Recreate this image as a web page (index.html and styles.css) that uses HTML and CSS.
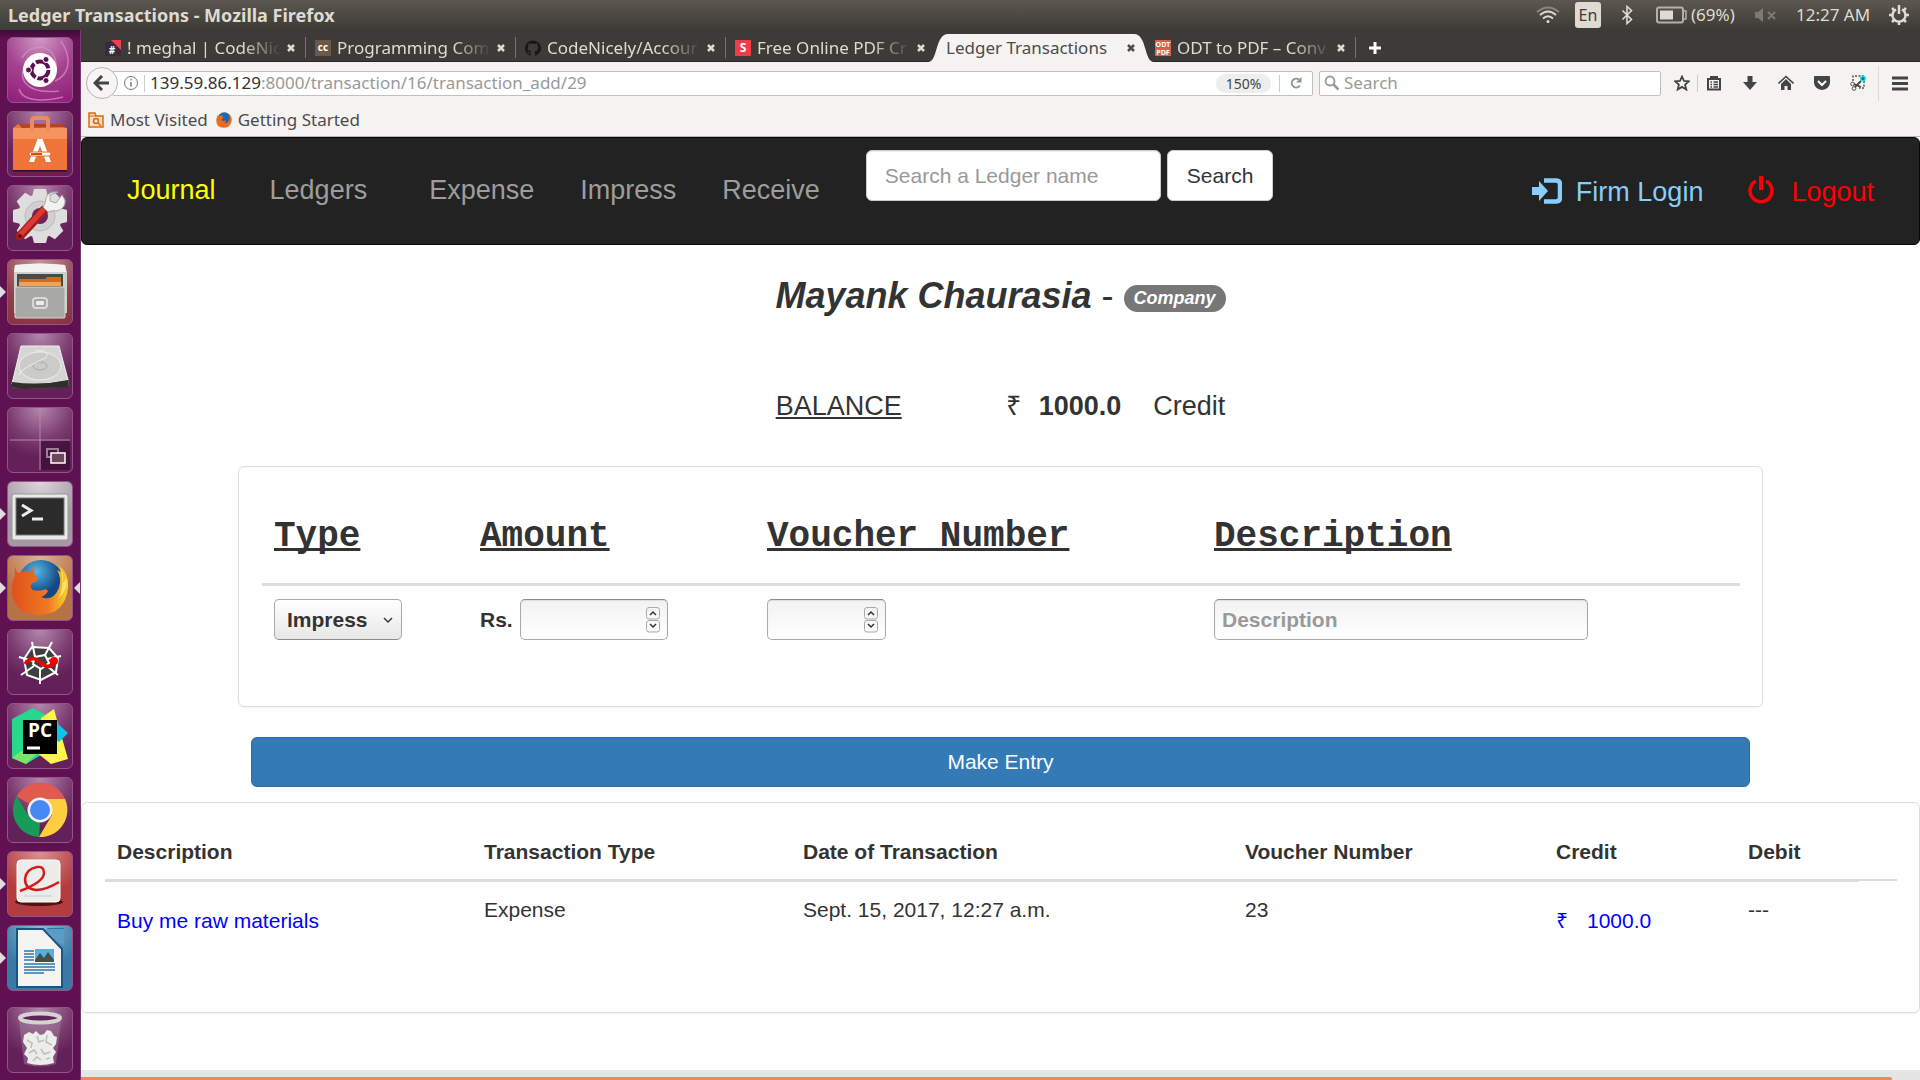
FILE: index.html
```html
<!DOCTYPE html>
<html lang="en">
<head>
<meta charset="utf-8">
<title>Ledger Transactions</title>
<link rel="stylesheet" href="styles.css">
</head>
<body>
<header class="panel">
  <span class="panel-title">Ledger Transactions - Mozilla Firefox</span>
  <div class="panel-status">
    <svg class="ind-wifi" width="24" height="20" viewBox="0 0 24 20" fill="none" stroke="#dfdbd2" stroke-width="2"><path d="M1 7Q12-2 23 7" stroke="#8b877f"/><path d="M4 10Q12 3 20 10"/><path d="M7 13.500Q12 9 17 13.500"/><circle cx="12" cy="16.500" r="1.500" fill="#dfdbd2" stroke="none"/></svg>
    <span class="lang">En</span>
    <svg class="ind-bt" width="12" height="20" viewBox="0 0 12 20" fill="none" stroke="#dfdbd2" stroke-width="1.600"><path d="M1.500 5.500l9 9L6 18.500v-17l4.500 4-9 9"/></svg>
    <svg class="ind-bat" width="31" height="18" viewBox="0 0 31 18"><rect x="1" y="1.500" width="26" height="15" rx="2" fill="none" stroke="#b5b1a8" stroke-width="2"/><path d="M28 5h2v8h-2" fill="none" stroke="#b5b1a8" stroke-width="1.500"/><rect x="4" y="4.500" width="13" height="9" fill="#dfdbd2"/></svg>
    <span class="pct">(69%)</span>
    <svg class="ind-mute" width="24" height="16" viewBox="0 0 24 16"><path d="M1 5h3l5-4v14l-5-4H1z" fill="#7d7a73"/><path d="M14 5l7 7M21 5l-7 7" stroke="#7d7a73" stroke-width="2"/></svg>
    <span class="clock">12:27 AM</span>
    <svg class="ind-gear" width="22" height="22" viewBox="0 0 22 22" fill="none" stroke="#dfdbd2"><path d="M8 5.500a6.500 6.500 0 1 0 6 0" stroke-width="2.500"/><path d="M11 1v9" stroke-width="2.500"/><path d="M4 4l3 3M18 4l-3 3M1 11h4M21 11h-4M4 18l3-3M18 18l-3-3M11 21v-4" stroke-width="2.500"/></svg>
  </div>
</header>
<div class="desktop">
<nav class="launcher" aria-label="Launcher">
  <button class="tile dash" aria-label="Dash"><svg viewBox="0 0 66 66"><path d="M21 24C8 40 18 58 52 54M15 21C24 4 52 6 49 34M48 44C62 38 66 22 54 4M12 52C16 66 40 64 56 60" fill="none" stroke="#dd8fca" stroke-width="1.500" opacity=".7"/><circle cx="33" cy="33" r="17" fill="#fff"/><circle cx="33" cy="33" r="8.500" fill="none" stroke="#5e1151" stroke-width="4" stroke-dasharray="15.800 2"/><g fill="#5e1151" stroke="#fff" stroke-width="1"><circle cx="21.500" cy="33" r="3"/><circle cx="39" cy="22.500" r="3"/><circle cx="39" cy="43.500" r="3"/></g></svg></button>
  <button class="tile" aria-label="Software"><svg viewBox="0 0 66 66"><path d="M6 59h54" stroke="#350a2e" stroke-width="3"/><path d="M6 18l5-5h44l5 5z" fill="#b9441c"/><path d="M6 17l5-4 4 4 40-1 5 1v42H6z" fill="#ee7537"/><path d="M6 17h54v11H6z" fill="#f69361"/><path d="M25 21V10q0-3 3-3h10q3 0 3 3v11" fill="none" stroke="#e98c60" stroke-width="4"/><path d="M22 51L30.500 28h5L44 51h-5l-6-16-6 16z" fill="#fff"/><rect x="22" y="41" width="22" height="4" rx="2" fill="#fff" stroke="#e26a33"/><path d="M24 43h11" stroke="#dd4814" stroke-width="2"/></svg></button>
  <button class="tile" aria-label="System Settings"><svg viewBox="0 0 66 66"><g transform="translate(33 31)" fill="#dedede"><circle r="22"/><path d="M-6-27h12l2 8H-8zM-6 27h12l2-8H-8z"/><path d="M-6-27h12l2 8H-8zM-6 27h12l2-8H-8z" transform="rotate(45)"/><path d="M-6-27h12l2 8H-8zM-6 27h12l2-8H-8z" transform="rotate(90)"/><path d="M-6-27h12l2 8H-8zM-6 27h12l2-8H-8z" transform="rotate(135)"/><circle r="15" fill="#d0d0d0" stroke="#bbb"/><circle r="8" fill="#6d2362"/></g><path d="M13 51L37 25" stroke="#a31d1d" stroke-width="9" stroke-linecap="round"/><path d="M14 49L36 25" stroke="#d93a36" stroke-width="5" stroke-linecap="round"/><circle cx="13" cy="51" r="2" fill="#6a1010"/><path d="M36 22l5 5q5-2 9-1 9-3 8-11l-3-5-6 8-6-2v-6l8-3q-10-1-12 6 0 5-3 9z" fill="#f2f2f0" stroke="#aaa"/></svg></button>
  <button class="tile files running" aria-label="Files"><svg viewBox="0 0 66 66"><path d="M8 6q25-3 50 0l2 7v41q-27 2-53 0V13z" fill="#cfcfcd"/><path d="M8 6q25-3 50 0l1 7H7z" fill="#f2f2f0"/><rect x="10" y="15" width="46" height="16" fill="#4a4a48"/><path d="M12 20h26l2-2h14v9H12z" fill="#d2691e"/><path d="M12 23h42v4H12z" fill="#eda35a"/><rect x="8" y="28" width="50" height="31" rx="1" fill="#a8a8a5" stroke="#d5d5d3"/><rect x="26" y="39" width="14" height="10" rx="3" fill="none" stroke="#d9d9d7" stroke-width="2"/><rect x="29" y="42" width="8" height="4" rx="1" fill="#ececea"/></svg></button>
  <button class="tile" aria-label="Disk"><svg viewBox="0 0 66 66"><path d="M5 47l9-34h38l10 34v6q-29 5-57 2z" fill="#555"/><path d="M14 13h38l9 34-28 4H5z" fill="#d5d5d3" stroke="#f1f1f0"/><path d="M5 49q28 4 56-2v7l-45 2-11-2z" fill="#2f2f2f"/><ellipse cx="33" cy="33" rx="21" ry="14" fill="#cbcbc9" stroke="#efefee"/><ellipse cx="33" cy="33" rx="7" ry="4" fill="none" stroke="#aaa"/><path d="M28 18h9q7 5-1 8l-12 6q-10 5-12 10" fill="none" stroke="#eee"/></svg></button>
  <button class="tile" aria-label="Workspaces"><svg viewBox="0 0 66 66"><path d="M34 34h29v29H34z" fill="#3a0c33" opacity=".7"/><path d="M33 3v60M3 33h60" stroke="#b08aa9" stroke-width="1"/><path d="M40 42h11v8H40z" fill="none" stroke="#9b8096" stroke-width="2"/><path d="M44 46h14v10H44z" fill="#70465f" stroke="#fff" stroke-width="1.500"/></svg></button>
  <button class="tile terminal running" aria-label="Terminal"><svg viewBox="0 0 66 66"><rect x="5" y="13" width="56" height="46" rx="2" fill="#e9e9e7" stroke="#9a9a98"/><rect x="9" y="17" width="48" height="37" fill="#2b2b2b" stroke="#777"/><path d="M15 24l9 5.500-9 5.500" fill="none" stroke="#eee" stroke-width="3"/><path d="M25 38h11" stroke="#eee" stroke-width="3"/></svg></button>
  <button class="tile firefox running active" aria-label="Firefox"><svg viewBox="0 0 66 66"><defs><radialGradient id="globe" cx=".4" cy=".25"><stop offset="0" stop-color="#58b6e5"/><stop offset="1" stop-color="#134785"/></radialGradient><linearGradient id="fox" x1="0" x2="1"><stop offset="0" stop-color="#e0501b"/><stop offset=".65" stop-color="#f07a22"/><stop offset="1" stop-color="#fbd52b"/></linearGradient></defs><circle cx="34" cy="28" r="23" fill="url(#globe)"/><path d="M9 11q-1 5 2 7 6-3 12-1l3-5q0 8 5 11-2 5-6 5-3 4 1 7 5 1 10 0 3-2 5 1-2 4-7 6 12 5 18-9 3-10-2-18l4 2q-1-5-4-8 12 8 11 24-3 26-28 27Q5 60 5 33q0-8 3-12-1-6 1-10z" fill="url(#fox)"/><path d="M53 12q5 8 2 17l5-6q0 14-10 22 9-13 3-33z" fill="#fbe36a"/></svg></button>
  <button class="tile" aria-label="Web tool"><svg viewBox="0 0 66 66"><path d="M25 18l17 1 9 10-2 14-15 8-14-5-3-16z" fill="#3f3f3f" stroke="#fff" stroke-width="2"/><path d="M25 13l3 15M45 13l-7 13M54 27l-14 3M51 46l-11-9M33 55V39M14 46l13-9M12 28l14 4M28 28l10-2 4 8-8 6-8-5z" fill="none" stroke="#fff" stroke-width="2"/><path d="M18 35q6-8 12-4 8 8 14 6l5-6" fill="none" stroke="#f00000" stroke-width="3.500"/><circle cx="47" cy="32" r="4" fill="#f00000"/></svg></button>
  <button class="tile" aria-label="PyCharm"><svg viewBox="0 0 66 66"><path d="M26 5L5 16v39l14 6 20-12V12z" fill="#25d88c"/><path d="M34 15L47 6l4 15 10 35-17 5-15-12z" fill="#fcf64a"/><path d="M49 19l12 11-9 9-4-3z" fill="#10c3e8"/><path d="M14 48L5 55l14 6 12-11z" fill="#79e36a"/><rect x="16" y="17" width="34" height="34" fill="#000"/><text x="33" y="34" class="pc-text">PC</text><path d="M20 45h13" stroke="#fff" stroke-width="3"/></svg></button>
  <button class="tile" aria-label="Chrome"><svg viewBox="0 0 66 66"><path d="M33 33L9.600 19.500A27 27 0 0 1 58 22H33z" fill="#df5b4e"/><path d="M33 22h25A27 27 0 0 1 32 60l13-22z" fill="#fdcf3e"/><path d="M9.600 19.500L23 41l10 5-1 14A27 27 0 0 1 9.600 19.500z" fill="#179c57"/><circle cx="33" cy="33" r="12.500" fill="#f1f1f1"/><circle cx="33" cy="33" r="10" fill="#4688f4"/></svg></button>
  <button class="tile pdf running" aria-label="PDF viewer"><svg viewBox="0 0 66 66"><ellipse cx="32" cy="51" rx="24" ry="4" fill="#541010"/><rect x="10" y="9" width="43" height="42" rx="4" fill="#ececeb" stroke="#fff"/><path d="M13 40q24-9 24-18 0-7-7-6-11 2-12 12 0 10 11 11 10 0 23-8" fill="none" stroke="#d61a1a" stroke-width="2.500"/><path d="M17 45h28" stroke="#ccc"/></svg></button>
  <button class="tile writer running" aria-label="Writer"><svg viewBox="0 0 66 66"><path d="M11 3h46v18L40 3z" fill="#2a76ac"/><path d="M10 4h26l19 20v38H10z" fill="#f4f4f3" stroke="#1b5583" stroke-width="2"/><path d="M38 4h19v17z" fill="#5b9cc6"/><rect x="28" y="24" width="19" height="13" fill="#59aede"/><path d="M28 35l5-7 4 5 4-6 6 8v2H28z" fill="#454f45"/><path d="M17 26h10M17 29h10M17 32h10M17 35h10M17 39h31M17 42h31M17 45h31M17 48h20" stroke="#2a78b4" stroke-width="1.500"/></svg></button>
  <button class="tile trash" aria-label="Trash"><svg viewBox="0 0 66 66"><path d="M12 14l5 43q16 5 32 0l5-43z" fill="#a185a0" opacity=".45"/><path d="M17 28l5-3 4 2 3-3 4 4 4-1 3-4 4 1 3 5 3 1-1 7-3 4 3 4-3 5 1 6q-14 4-27 0l1-5-4-4 3-6-4-6z" fill="#ececea"/><path d="M20 33l5 3-1 5M30 29l2 6 5-2M40 28l-1 7 6 3M22 46l5-3 3 4M34 42l3 5 6-2M26 54l4-4 4 3M39 52l4-1" fill="none" stroke="#bdbdbb" stroke-width="1.500"/><ellipse cx="33" cy="11" rx="20" ry="4.500" fill="#61215a" stroke="#d4d4d2" stroke-width="4"/></svg></button>
</nav>
<div class="browser">
  <div class="tabs">
    <div class="tab"><svg class="fav" viewBox="0 0 16 16"><path fill="#3b2a3e" d="M0 2h16v14H0z"/><path fill="#ee3f56" d="M6 0h10v10z"/><text x="7" y="14" class="fav-text">#</text></svg><span class="tab-name">! meghal | CodeNic</span><button class="x" aria-label="Close tab"><svg width="8" height="8" viewBox="0 0 8 8"><path d="M1 1l6 6M7 1L1 7" stroke="currentColor" stroke-width="2.500"/></svg></button></div>
    <div class="tab"><svg class="fav" viewBox="0 0 16 16"><path fill="#6e5745" d="M0 0h16v16H0z"/><text x="8" y="11" class="fav-text">cc</text></svg><span class="tab-name">Programming Com</span><button class="x" aria-label="Close tab"><svg width="8" height="8" viewBox="0 0 8 8"><path d="M1 1l6 6M7 1L1 7" stroke="currentColor" stroke-width="2.500"/></svg></button></div>
    <div class="tab"><svg class="fav" viewBox="0 0 16 16"><path fill="#191717" d="M8 .5C3.500.5 0 4 0 8.200c0 3.500 2.300 6.400 5.500 7.400.4 0 .5-.2.5-.4v-1.500c-2.200.5-2.700-1-2.700-1-.4-.9-.9-1.200-.9-1.200-.7-.5.1-.5.1-.5.800.1 1.200.8 1.200.8.700 1.200 1.900.9 2.300.7.100-.5.300-.9.500-1.100-1.800-.2-3.600-.9-3.600-3.900 0-.9.300-1.600.8-2.200-.1-.200-.4-1 .1-2.100 0 0 .7-.2 2.200.8a7.500 7.500 0 0 1 4 0c1.500-1 2.200-.8 2.200-.8.500 1.100.2 1.900.1 2.100.5.600.8 1.300.8 2.200 0 3-1.900 3.700-3.600 3.900.3.300.5.800.5 1.500v2.300c0 .2.100.5.500.4 3.200-1 5.500-4 5.500-7.400C16 4 12.400.5 8 .5z"/></svg><span class="tab-name">CodeNicely/Accour</span><button class="x" aria-label="Close tab"><svg width="8" height="8" viewBox="0 0 8 8"><path d="M1 1l6 6M7 1L1 7" stroke="currentColor" stroke-width="2.500"/></svg></button></div>
    <div class="tab before"><svg class="fav" viewBox="0 0 16 16"><path fill="#f03c46" d="M0 0h16v16H0z"/><text x="8" y="12" class="fav-text big">S</text></svg><span class="tab-name">Free Online PDF Cr</span><button class="x" aria-label="Close tab"><svg width="8" height="8" viewBox="0 0 8 8"><path d="M1 1l6 6M7 1L1 7" stroke="currentColor" stroke-width="2.500"/></svg></button></div>
    <div class="tab current"><svg class="tab-shape" viewBox="0 0 226 28" preserveAspectRatio="none"><path d="M0 28C10 28 7 0 20 0H206C219 0 216 28 226 28z" fill="#f4f3f1"/></svg><span class="tab-name">Ledger Transactions</span><button class="x" aria-label="Close tab"><svg width="8" height="8" viewBox="0 0 8 8"><path d="M1 1l6 6M7 1L1 7" stroke="currentColor" stroke-width="2.500"/></svg></button></div>
    <div class="tab"><svg class="fav" viewBox="0 0 16 16"><path fill="#dc5f47" d="M0 0h16v16H0z"/><text x="8" y="7" class="fav-text small">ODT</text><text x="8" y="15" class="fav-text small">PDF</text></svg><span class="tab-name">ODT to PDF – Conv</span><button class="x" aria-label="Close tab"><svg width="8" height="8" viewBox="0 0 8 8"><path d="M1 1l6 6M7 1L1 7" stroke="currentColor" stroke-width="2.500"/></svg></button></div>
    <button class="new-tab" aria-label="New tab"><svg width="14" height="14" viewBox="0 0 14 14"><path d="M7 1v12M1 7h12" stroke="#fff" stroke-width="3"/></svg></button>
  </div>
  <div class="toolbar">
    <button class="back" aria-label="Back"><svg width="18" height="16" viewBox="0 0 18 16"><path d="M9 1L2 8l7 7M2 8h14" fill="none" stroke="#444" stroke-width="3"/></svg></button>
    <div class="urlbar">
      <svg width="16" height="16" viewBox="0 0 16 16"><circle cx="8" cy="8" r="6.500" fill="none" stroke="#777"/><path d="M8 7v4.500M8 4v1.500" stroke="#777" stroke-width="1.500"/></svg>
      <span class="url-sep"></span>
      <span class="url"><b>139.59.86.129</b>:8000/transaction/16/transaction_add/29</span>
      <span class="zoom">150%</span>
      <button class="reload" aria-label="Reload"><svg width="14" height="14" viewBox="0 0 14 14"><path d="M11 9.500a4.500 4.500 0 1 1-1-6" fill="none" stroke="#8a94a0" stroke-width="1.800"/><path d="M12.500 1v5.500H7z" fill="#8a94a0"/></svg></button>
    </div>
    <label class="search"><svg width="16" height="16" viewBox="0 0 16 16"><circle cx="6" cy="6" r="4.500" fill="none" stroke="#999" stroke-width="1.800"/><path d="M9.500 9.500l5 5" stroke="#999" stroke-width="2.500"/></svg><input class="search-input" type="text" placeholder="Search" aria-label="Web search"></label>
    <div class="tools">
      <button class="tool" aria-label="Bookmark"><svg viewBox="0 0 16 16"><path d="M8 1.500l2 4.500 4.800.4-3.700 3.200 1.200 4.900L8 11.900l-4.300 2.600 1.200-4.900L1.200 6.400 6 6z" fill="none" stroke="#444" stroke-width="1.800"/></svg></button>
      <span class="tool-sep"></span>
      <button class="tool" aria-label="Library"><svg viewBox="0 0 16 16"><path d="M2 4h12v10.500H2z" fill="none" stroke="#444" stroke-width="2"/><path d="M5 4V2h6v2" fill="none" stroke="#444" stroke-width="2"/><path d="M4.500 7h1.500M7.500 7h4.500M4.500 9.500h1.500M7.500 9.500h4.500M4.500 12h1.500M7.500 12h4.500" stroke="#444" stroke-width="1.300"/></svg></button>
      <button class="tool" aria-label="Downloads"><svg viewBox="0 0 16 16"><path d="M5.500 1h5v6H15l-7 8-7-8h4.500z" fill="#444"/></svg></button>
      <button class="tool" aria-label="Home"><svg viewBox="0 0 16 16"><path d="M.5 8.500L8 1.500l7.500 7" fill="none" stroke="#444" stroke-width="1.600"/><path d="M3 9l5-5 5 5v6H9.500v-4h-3v4H3z" fill="#444"/></svg></button>
      <button class="tool" aria-label="Pocket"><svg viewBox="0 0 16 16"><path d="M1 1h14q1 0 1 1v6q-1 6-8 7-7-1-8-7V2q0-1 1-1z" fill="#444"/><path d="M4 6l4 4 4-4" fill="none" stroke="#fff" stroke-width="2"/></svg></button>
      <button class="tool" aria-label="Screenshot"><svg viewBox="0 0 16 16"><path d="M3 6V1h11v12h-5" fill="none" stroke="#555" stroke-width="1.500" stroke-dasharray="2 1.500"/><circle cx="2.500" cy="9" r="1.800" fill="none" stroke="#555"/><circle cx="4" cy="13.500" r="1.800" fill="none" stroke="#555"/><path d="M4 9l7 3M5 12l6-6" stroke="#444" stroke-width="1.800"/><circle cx="13" cy="3.500" r="3" fill="#14e4f4"/><circle cx="13" cy="3.500" r="1.500" fill="#0a6c80"/></svg></button>
      <span class="menu-sep"></span>
      <button class="tool" aria-label="Menu"><svg viewBox="0 0 16 16"><path d="M0 3h16M0 8.500h16M0 14h16" stroke="#444" stroke-width="3"/></svg></button>
    </div>
  </div>
  <div class="bookmarks">
    <svg width="16" height="16" viewBox="0 0 16 16"><path d="M1 15V1h6l1 3h7v11z" fill="#fbe0c0" stroke="#d56b12" stroke-width="1.500"/><path d="M1 4h7" stroke="#d56b12"/><circle cx="8" cy="9" r="2.500" fill="none" stroke="#d56b12" stroke-width="1.500"/><path d="M10 11l3 3" stroke="#d56b12" stroke-width="1.500"/></svg>
    <a href="#" class="mark">Most Visited</a>
    <svg width="16" height="16" viewBox="4 3 58 58"><circle cx="34" cy="28" r="24" fill="#2467ab"/><path d="M9 11q-1 5 2 7 6-3 12-1l3-5q0 8 5 11-2 5-6 5-3 4 1 7 5 1 10 0 3-2 5 1-2 4-7 6 12 5 18-9 3-10-2-18l4 2q-1-5-4-8 12 8 11 24-3 26-28 27Q5 60 5 33q0-8 3-12-1-6 1-10z" fill="#ec6a1f"/></svg>
    <a href="#" class="mark">Getting Started</a>
  </div>
  <main class="page">
    <nav class="navbar">
      <a href="#" class="nav-link brand">Journal</a>
      <a href="#" class="nav-link ledgers">Ledgers</a>
      <a href="#" class="nav-link">Expense</a>
      <a href="#" class="nav-link">Impress</a>
      <a href="#" class="nav-link">Receive</a>
      <form class="nav-form"><input class="nav-input" type="text" placeholder="Search a Ledger name" aria-label="Search a Ledger name"><button type="button" class="nav-btn">Search</button></form>
      <div class="nav-right">
        <a href="#" class="user-link login"><svg width="30" height="26" viewBox="0 0 30 26"><path d="M0 9h7V3l9 10-9 10v-6H0z" fill="#87cefa"/><path d="M12 2.500h12q4 0 4 4v13q0 4-4 4H12" fill="none" stroke="#87cefa" stroke-width="4.500"/></svg>Firm Login</a>
        <a href="#" class="user-link logout"><svg width="26" height="28" viewBox="0 0 26 28"><path d="M8 5a11 11 0 1 0 10 0" fill="none" stroke="red" stroke-width="3.500"/><path d="M13 0v14" stroke="red" stroke-width="4"/></svg>Logout</a>
      </div>
    </nav>
    <h1 class="title"><strong><em>Mayank Chaurasia</em></strong> - <em class="badge">Company</em></h1>
    <p class="balance"><u>BALANCE</u><span class="rupee">₹</span><strong>1000.0</strong><span class="side">Credit</span></p>
    <form class="entry">
      <div class="card">
        <table class="fields">
          <colgroup><col class="f-type"><col class="f-amount"><col class="f-voucher"><col></colgroup>
          <thead><tr><th><u>Type</u></th><th><u>Amount</u></th><th><u>Voucher Number</u></th><th><u>Description</u></th></tr></thead>
          <tbody><tr>
            <td><span class="field w-type"><select class="control select" aria-label="Type"><option>Impress</option><option>Expense</option><option>Receive</option></select><svg class="caret" width="10" height="6" viewBox="0 0 10 6"><path d="M1 1l4 4 4-4" fill="none" stroke="#3c3b37" stroke-width="1.500"/></svg></span></td>
            <td><div class="amount"><label for="amount">Rs.</label><span class="field w-amount"><input id="amount" class="control" type="number"><svg class="spin" width="14" height="26" viewBox="0 0 14 26" fill="none" stroke="#aaa"><rect x=".5" y=".5" width="13" height="11.500" rx="2.500"/><rect x=".5" y="13.500" width="13" height="11.500" rx="2.500"/><path d="M4 8l3-3 3 3M4 17l3 3 3-3" stroke="#333" stroke-width="1.500"/></svg></span></div></td>
            <td><span class="field w-voucher"><input class="control" type="number" aria-label="Voucher Number"><svg class="spin" width="14" height="26" viewBox="0 0 14 26" fill="none" stroke="#aaa"><rect x=".5" y=".5" width="13" height="11.500" rx="2.500"/><rect x=".5" y="13.500" width="13" height="11.500" rx="2.500"/><path d="M4 8l3-3 3 3M4 17l3 3 3-3" stroke="#333" stroke-width="1.500"/></svg></span></td>
            <td><span class="field w-desc"><input class="control" type="text" placeholder="Description" aria-label="Description"></span></td>
          </tr></tbody>
        </table>
      </div>
      <button type="button" class="make">Make Entry</button>
    </form>
    <section class="card ledger">
      <table class="rows">
        <colgroup><col class="c-desc"><col class="c-type"><col class="c-date"><col class="c-voucher"><col class="c-credit"><col class="c-debit"><col></colgroup>
        <thead><tr><th>Description</th><th>Transaction Type</th><th>Date of Transaction</th><th>Voucher Number</th><th>Credit</th><th>Debit</th><th></th></tr></thead>
        <tbody><tr><td><a href="#" class="entry-link">Buy me raw materials</a></td><td>Expense</td><td>Sept. 15, 2017, 12:27 a.m.</td><td>23</td><td><a href="#" class="entry-link"><span class="coin">₹</span>1000.0</a></td><td>---</td><td class="end"></td></tr></tbody>
      </table>
    </section>
    <div class="hscroll"><div class="hscroll-thumb"></div></div>
  </main>
</div>
</div>
</body>
</html>
```
FILE: styles.css
```css
* { box-sizing: border-box; }
body { margin: 0; min-height: 100vh; display: flex; flex-direction: column; font-family: "Noto Sans", sans-serif; font-size: 17px; line-height: 22px; background: #fff; }
button { border: 0; padding: 0; background: none; font: inherit; color: inherit; }
svg { display: block; flex: none; }

.panel { height: 30px; display: flex; align-items: center; justify-content: space-between; padding: 0 10px 0 8px; color: #dfdbd2; background: linear-gradient(#5c584f, #3c3b37); }
.panel-title { font-size: 18px; font-weight: 700; }
.panel-status { display: flex; align-items: center; }
.ind-wifi { margin-right: 15px; }
.lang { width: 26px; height: 26px; line-height: 27px; border-radius: 3px; background: #dfdbd2; color: #3c3b37; text-align: center; font-size: 16px; margin-right: 20px; }
.ind-bt { margin-right: 23px; }
.ind-bat { margin-right: 4px; }
.pct { width: 48px; margin-right: 15px; white-space: nowrap; }
.ind-mute { margin-right: 18px; }
.clock { width: 77px; margin-right: 15px; white-space: nowrap; }

.desktop { flex: 1; display: flex; }
.launcher { flex: none; width: 81px; padding: 7px; display: flex; flex-direction: column; gap: 8px; background: linear-gradient(#3d0a35, #5f1152 10px); border-right: 1px solid #7c3a72; }
.tile { position: relative; width: 66px; height: 66px; border-radius: 6px; border: 1px solid #94568a; background: radial-gradient(circle at 50% 0, #b487ac, #7a3a6f 45%, #642059 70%); }
.tile > svg { width: 66px; height: 66px; margin: -1px; }
.dash { background: radial-gradient(circle at 50% 0, #cf9ac4, #a5438f 50%, #8f1d79); }
.files { background: radial-gradient(circle at 50% 0, #c9929c, #92404c 60%, #86343f); }
.terminal { background: radial-gradient(circle at 50% 0, #dcd5dc, #a698a5 60%); }
.firefox { background: radial-gradient(circle at 50% 0, #dbb494, #b87247 60%); }
.pdf { background: radial-gradient(circle at 50% 0, #dc9090, #b33c40 60%); }
.writer { background: radial-gradient(circle at 50% 0, #8fb9d4, #397aa7 60%); }
.trash { margin-top: auto; }
.running::before { content: ""; position: absolute; left: -8px; top: 26px; border: 6px solid transparent; border-left-color: #e0dde0; border-right-width: 0; }
.active::after { content: ""; position: absolute; right: -8px; top: 26px; border: 6px solid transparent; border-right-color: #e0dde0; border-left-width: 0; }
.pc-text { font: 700 19px "Open Sans", sans-serif; fill: #fff; text-anchor: middle; }

.browser { flex: 1; min-width: 0; display: flex; flex-direction: column; }
.tabs { height: 32px; display: flex; padding-left: 15px; background: #3c3b37; color: #dfdbd2; border-bottom: 1px solid #262622; }
.tab { position: relative; width: 210px; display: flex; align-items: center; padding: 4px 11px 0 9px; }
.tab::after { content: ""; position: absolute; right: 0; top: 7px; height: 21px; border-right: 1px solid #75746f; }
.tab.before::after, .tab.current::after { display: none; }
.fav { width: 16px; height: 16px; margin-right: 6px; }
.fav-text { font: 700 10px "Open Sans", sans-serif; fill: #fff; text-anchor: middle; }
.fav-text.big { font-size: 12px; }
.fav-text.small { font-size: 7px; }
.tab-name { flex: 1; overflow: hidden; white-space: nowrap; -webkit-mask-image: linear-gradient(90deg, #000 75%, transparent); mask-image: linear-gradient(90deg, #000 75%, transparent); }
.x { position: relative; width: 8px; margin-left: 6px; }
.current { padding-left: 10px; color: #4c4c4c; }
.current .tab-name { position: relative; -webkit-mask-image: none; mask-image: none; }
.tab-shape { position: absolute; left: -8px; top: 4px; width: 226px; height: 28px; z-index: 0; }
.new-tab { margin-left: 12px; padding-top: 4px; }

.toolbar { height: 42px; display: flex; align-items: center; padding-left: 5px; background: #f4f3f1; }
.back { position: relative; z-index: 1; width: 32px; height: 32px; display: grid; place-items: center; border: 1px solid #b9b5b0; border-radius: 50%; background: #f6f5f4; }
.urlbar { flex: 1; height: 25px; margin-left: -6px; padding-left: 10px; display: flex; align-items: center; background: #fff; border: 1px solid #c3bfba; border-radius: 2px; }
.url-sep { width: 1px; height: 17px; margin: 0 5px; background: #ccc; }
.url { flex: 1; color: #999; white-space: nowrap; }
.url b { font-weight: 400; color: #333; }
.zoom { width: 55px; height: 19px; line-height: 19px; border-radius: 9px; background: #efeeee; color: #444; font-size: 14px; text-align: center; }
.reload { height: 17px; margin-left: 8px; padding: 0 9px; border-left: 1px solid #ccc; }
.search { width: 342px; height: 25px; margin-left: 6px; padding-left: 4px; display: flex; align-items: center; gap: 4px; background: #fff; border: 1px solid #c3bfba; border-radius: 2px; }
.search-input { flex: 1; min-width: 0; border: 0; padding: 0; outline: 0; background: none; font: inherit; }
.search-input::placeholder { color: #999; }
.tools { display: flex; align-items: center; padding: 0 12px 0 13px; }
.tool { width: 16px; height: 16px; margin-right: 20px; }
.tool svg { width: 16px; height: 16px; }
.tool:first-child { margin-right: 7px; }
.tool:last-child { margin-right: 0; }
.tool-sep { width: 1px; height: 17px; margin-right: 8px; background: #ccc; }
.menu-sep { width: 1px; height: 35px; margin: 0 13px 0 -8px; background: #dcdad7; }
.bookmarks { height: 33px; display: flex; align-items: center; padding: 0 7px; background: #f4f3f1; border-bottom: 1px solid #b8bab2; }
.mark { margin: 0 8px 0 6px; color: #4c4c4c; text-decoration: none; }

.page { flex: 1; display: flex; flex-direction: column; font: 21px/30px "Liberation Sans", Arial, sans-serif; color: #333; background: #fff; }
.navbar { height: 108px; display: flex; align-items: flex-start; padding: 0 45px; background: #222; border: 1px solid #080808; border-radius: 6px; font-size: 27px; }
.nav-link { margin: 37px 46px 0 0; color: #9d9d9d; text-decoration: none; }
.brand { margin-right: 54px; color: #ff0; }
.ledgers { margin-right: 62px; }
.nav-form { display: flex; gap: 6px; margin-top: 12px; }
.nav-input, .nav-btn { height: 51px; border-radius: 6px; border: 1px solid #ccc; background: #fff; color: #333; font: 21px "Liberation Sans", Arial, sans-serif; }
.nav-input { width: 295px; padding: 0 18px; box-shadow: inset 0 1px 1px rgba(0,0,0,.08); }
.nav-input::placeholder { color: #999; }
.nav-btn { padding: 0 19px; }
.nav-right { margin: 39px 0 0 auto; display: flex; gap: 45px; }
.user-link { display: flex; align-items: flex-start; gap: 14px; text-decoration: none; }
.login { color: #87cefa; }
.logout { color: red; gap: 17px; }
.login svg { margin-top: 1px; }
.logout svg { margin-top: -1px; }
.title { margin: 31px 0 75px; font-size: 36px; line-height: 40px; font-weight: 400; text-align: center; }
.badge { display: inline-block; padding: 0 10px; border-radius: 14px; background: #777; color: #fff; font-size: 18px; font-weight: 700; line-height: 27px; vertical-align: 4px; }
.balance { margin: 0 0 45px; display: flex; justify-content: center; font-size: 27px; }
.balance u, .fields u { text-decoration-skip-ink: none; }
.rupee { margin: 0 18px 0 104px; }
.side { margin-left: 32px; }
.entry { padding: 0 157px; }
.card { border: 1px solid #ddd; border-radius: 6px; padding: 23px 22px 54px 23px; box-shadow: 0 1px 2px rgba(0,0,0,.05); }
table { width: 100%; table-layout: fixed; border-spacing: 0; }
th { text-align: left; }
td { vertical-align: top; border-top: 3px solid #ddd; }
.fields th { padding: 21px 12px; font: 700 36px/51px "Liberation Mono", "Courier New", monospace; white-space: nowrap; }
.fields td { padding: 13px 12px 12px; }
.f-type { width: 206px; }
.f-amount { width: 287px; }
.f-voucher { width: 447px; }
.amount { display: flex; align-items: center; gap: 7px; font-weight: 700; }
.field { position: relative; display: block; }
.w-type { width: 128px; }
.w-amount { width: 148px; }
.w-voucher { width: 119px; }
.w-desc { width: 374px; }
.control { display: block; width: 100%; height: 41px; padding: 0 7px; border: 1px solid #aaa; border-top-color: #8c8c8c; border-radius: 5px; background: linear-gradient(#f2f2f2, #fff); box-shadow: inset 0 1px 1px #ddd; color: #333; font: 700 21px "Liberation Sans", Arial, sans-serif; appearance: none; -moz-appearance: textfield; }
.control::-webkit-inner-spin-button { display: none; }
.control::placeholder { color: #999; }
.select { padding: 0 12px; background: linear-gradient(#fff, #e8e7e6); border-color: #aaa #aaa #8c8c8c; box-shadow: none; }
.caret { position: absolute; right: 9px; top: 18px; pointer-events: none; }
.spin { position: absolute; right: 8px; top: 8px; pointer-events: none; }
.make { display: block; width: calc(100% - 26px); height: 50px; margin: 30px 13px 15px; background: #337ab7; border: 1px solid #2e6da4; border-radius: 6px; color: #fff; }
.ledger { margin-bottom: auto; padding: 22px 22px 64px 23px; }
.rows th { padding: 12px; white-space: nowrap; }
.rows td { padding: 13px 12px 12px; }
.rows .end { border-top-width: 2px; }
.c-desc { width: 367px; }
.c-type { width: 319px; }
.c-date { width: 442px; }
.c-voucher { width: 311px; }
.c-credit { width: 192px; }
.c-debit { width: 122px; }
.entry-link { display: block; margin-top: 11px; color: #00f; text-decoration: none; }
.coin { margin-right: 19px; }
.hscroll { padding: 7px 28px 0 0; background: #e5e5e5; }
.hscroll-thumb { height: 3px; background: #f08763; border-radius: 0 2px 0 0; }
```
